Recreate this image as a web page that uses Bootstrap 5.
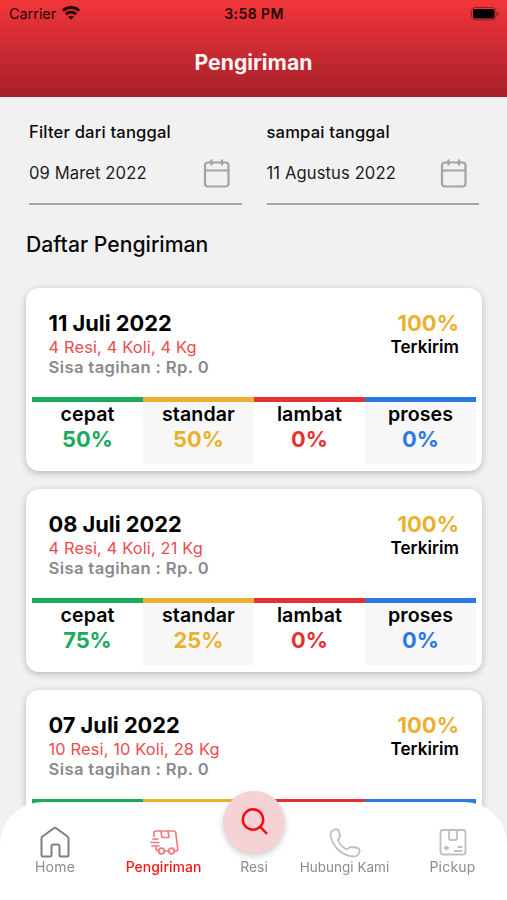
<!DOCTYPE html>
<html lang="id">
<head>
<meta charset="utf-8">
<meta name="viewport" content="width=device-width, initial-scale=1">
<title>Pengiriman</title>
<link href="https://cdn.jsdelivr.net/npm/bootstrap@5.3.0/dist/css/bootstrap.min.css" rel="stylesheet">
<style>
:root{--green:#1aab5c;--amber:#ebb02f;--red:#e83034;--blue:#2c79e6}
html,body{height:100%}
body{font-family:Inter,"Liberation Sans",sans-serif;color:#0a0a0a;background:#f1f1f1}
.screen{height:900px;max-width:507px;overflow:hidden}
.top-head{height:97px;background:linear-gradient(#f2363a,#a5202a)}
.status-bar{height:27px;font-size:14.4px;color:#260507;display:grid;grid-template-columns:1fr auto 1fr;padding:0 8px 0 9px}
.status-time{font-weight:600;font-size:14px;letter-spacing:.4px}
.top-title{font-size:21.2px;line-height:28px;font-weight:700;color:#fff5f5;margin-top:20.500px}
.filters{padding:24px 28px 0 29px;gap:25px}
.filter-field{flex:1 1 0;height:84px;border-bottom:2px solid #a6a6a6}
.filter-name{font-size:16.6px;line-height:22px;font-weight:500;letter-spacing:.17px}
.filter-date{font-size:16.6px;line-height:22px;color:#1c1c1c;letter-spacing:.1px}
.date-row{margin-top:15px;padding-right:12px}
.list-title{font-size:21.2px;line-height:28px;font-weight:500;margin:25px 0 30px 26px}
.deliveries{padding:0 25px 0 26px;gap:18px}
.delivery{height:183px;border:0;border-radius:13px;padding:0 6px;box-shadow:0 2px 7px rgba(0,0,0,.24);flex:none}
.delivery-top{height:109px;padding:22px 17px 0 16.500px}
.d-date{font-size:21.8px;line-height:27px;font-weight:700;color:#000}
.d-info{font-size:16.4px;line-height:20px;color:#ee4a4e;letter-spacing:.15px}
.d-rest{font-size:16.6px;line-height:21px;font-weight:600;color:#8a8a8a;letter-spacing:.38px}
.d-pct{font-size:22px;line-height:26px;font-weight:700;color:var(--amber)}
.d-state{font-size:17.1px;line-height:21px;font-weight:600;color:#000;letter-spacing:.05px}
.speed{flex:1 1 0;height:67px;border-top:5px solid;text-align:center;padding-top:1px}
.speed:nth-child(even){background:#f7f7f7}
.speed-name{font-size:19.6px;line-height:22px;font-weight:600;color:#000;letter-spacing:.1px}
.speed-val{font-size:21.8px;line-height:28px;font-weight:700}
.c-green{color:var(--green)}.c-amber{color:var(--amber)}.c-red{color:var(--red)}.c-blue{color:var(--blue)}
.tabs-bar{height:98px;max-width:507px;background:#fff;border-radius:43px 43px 0 0;color:#8c8c8c}
.tab{flex:none;padding-top:23px;font-size:14px;line-height:16px}
.tab svg{height:34px;display:block}
.tab-home{width:110px;letter-spacing:.2px}
.tab-send{width:107px}
.tab-resi{width:74px}
.tab-call{width:107px;font-size:13.500px}
.tab-pick{width:109px;letter-spacing:.2px}
.tab-on{color:#f01c1c;font-weight:500}
.fab{width:62px;height:62px;margin-top:-34px;margin-bottom:6px;background:#f5d3d5;box-shadow:0 3px 6px rgba(0,0,0,.2)}
</style>
</head>
<body>
<main class="screen d-flex flex-column">
<header class="top-head flex-shrink-0">
  <div class="status-bar align-items-center">
    <div class="d-flex align-items-center gap-2"><span>Carrier</span>
      <svg style="margin-left:-2px" width="18" height="14" viewBox="0 0 18 14" fill="none" stroke="#260507" stroke-width="2.8"><path d="M.8 4.700C5.600.4 12.400.4 17.200 4.700M3.800 8.200c3.100-2.700 7.300-2.700 10.400 0"/><path d="M9 13.600 6 10.800c1.700-1.500 4.300-1.500 6 0z" fill="#260507" stroke="none"/></svg></div>
    <span class="status-time">3:58 PM</span>
    <svg class="ms-auto" width="28" height="14" viewBox="0 0 28 14"><rect x="0.500" y="0.500" width="24.500" height="12.500" rx="3.800" fill="none" stroke="#8f1f24"/><rect x="2" y="2" width="21.500" height="9.500" rx="2" fill="#000"/><path d="M26 5v4q1.600-.6 1.600-2T26 5" fill="#8f1f24"/></svg>
  </div>
  <h1 class="top-title text-center mb-0">Pengiriman</h1>
</header>
<section class="filters d-flex flex-shrink-0">
  <div class="filter-field"><div class="filter-name">Filter dari tanggal</div>
    <div class="date-row d-flex justify-content-between align-items-center"><span class="filter-date">09 Maret 2022</span>
    <svg width="27" height="30" viewBox="0 0 27 30" fill="none" stroke="#a3a3a3" stroke-width="2.200"><rect x="2" y="4.500" width="23.500" height="24" rx="3"/><path d="M2 12.500h23.500M8.500 1.500v6M19 1.500v6"/></svg></div></div>
  <div class="filter-field"><div class="filter-name">sampai tanggal</div>
    <div class="date-row d-flex justify-content-between align-items-center"><span class="filter-date">11 Agustus 2022</span>
    <svg width="27" height="30" viewBox="0 0 27 30" fill="none" stroke="#a3a3a3" stroke-width="2.200"><rect x="2" y="4.500" width="23.500" height="24" rx="3"/><path d="M2 12.500h23.500M8.500 1.500v6M19 1.500v6"/></svg></div></div>
</section>
<h2 class="list-title flex-shrink-0">Daftar Pengiriman</h2>
<section class="deliveries d-flex flex-column">
  <article class="card delivery">
    <div class="delivery-top d-flex justify-content-between">
      <div><div class="d-date">11 Juli 2022</div><div class="d-info">4 Resi, 4 Koli, 4 Kg</div><div class="d-rest">Sisa tagihan : Rp. 0</div></div>
      <div class="text-end"><div class="d-pct">100%</div><div class="d-state">Terkirim</div></div>
    </div>
    <div class="d-flex">
      <div class="speed c-green"><div class="speed-name">cepat</div><div class="speed-val">50%</div></div>
      <div class="speed c-amber"><div class="speed-name">standar</div><div class="speed-val">50%</div></div>
      <div class="speed c-red"><div class="speed-name">lambat</div><div class="speed-val">0%</div></div>
      <div class="speed c-blue"><div class="speed-name">proses</div><div class="speed-val">0%</div></div>
    </div>
  </article>
  <article class="card delivery">
    <div class="delivery-top d-flex justify-content-between">
      <div><div class="d-date">08 Juli 2022</div><div class="d-info">4 Resi, 4 Koli, 21 Kg</div><div class="d-rest">Sisa tagihan : Rp. 0</div></div>
      <div class="text-end"><div class="d-pct">100%</div><div class="d-state">Terkirim</div></div>
    </div>
    <div class="d-flex">
      <div class="speed c-green"><div class="speed-name">cepat</div><div class="speed-val">75%</div></div>
      <div class="speed c-amber"><div class="speed-name">standar</div><div class="speed-val">25%</div></div>
      <div class="speed c-red"><div class="speed-name">lambat</div><div class="speed-val">0%</div></div>
      <div class="speed c-blue"><div class="speed-name">proses</div><div class="speed-val">0%</div></div>
    </div>
  </article>
  <article class="card delivery">
    <div class="delivery-top d-flex justify-content-between">
      <div><div class="d-date">07 Juli 2022</div><div class="d-info">10 Resi, 10 Koli, 28 Kg</div><div class="d-rest">Sisa tagihan : Rp. 0</div></div>
      <div class="text-end"><div class="d-pct">100%</div><div class="d-state">Terkirim</div></div>
    </div>
    <div class="d-flex">
      <div class="speed c-green"></div><div class="speed c-amber"></div><div class="speed c-red"></div><div class="speed c-blue"></div>
    </div>
  </article>
</section>
</main>
<nav class="tabs-bar fixed-bottom d-flex">
  <div class="tab tab-home d-flex flex-column align-items-center">
    <svg width="32" height="34" viewBox="0 0 32 34" fill="none" stroke="#7f7f7f" stroke-width="2" stroke-linejoin="round"><path d="M4 31.500q-1.500 0-1.500-1.500V13.500q0-1.200 1-2L14.800 3.300q1.200-.9 2.400 0L28.500 11.500q1 .8 1 2V30q0 1.500-1.500 1.500h-6q-1.500 0-1.500-1.500v-8.500q0-2-2-2h-4q-2 0-2 2V30q0 1.500-1.500 1.500z"/></svg>
    <span>Home</span></div>
  <div class="tab tab-send tab-on d-flex flex-column align-items-center">
    <svg width="30" height="34" viewBox="0 0 30 34" fill="none" stroke="#f27a7c" stroke-width="1.700" stroke-linecap="round" stroke-linejoin="round"><path d="M5 11.500V8q0-2 2-2h17.500q2 0 2.300 2l1.900 15.500q.2 2.500-2 2.500M18.800 26h-3.300M7 22.500l.5 3h2M12 6l.7 5.500q.2 1 1.200 1h5q1.200 0 1-1.200L19 6M4 14h5M2 17.500h8M3 21h7"/><circle cx="12.500" cy="26" r="2.800"/><circle cx="22.500" cy="26" r="2.800"/></svg>
    <span>Pengiriman</span></div>
  <div class="tab tab-resi d-flex flex-column align-items-center">
    <div class="fab rounded-circle d-flex align-items-center justify-content-center flex-shrink-0"><svg width="30" height="34" viewBox="0 0 30 34" fill="none" stroke="#fa0a0f" stroke-width="2.400"><circle cx="14" cy="14.500" r="10.200"/><path d="m21 21.500 7 7.300"/></svg></div>
    <span>Resi</span></div>
  <div class="tab tab-call d-flex flex-column align-items-center">
    <svg width="32" height="34" viewBox="0 0 32 34" fill="none" stroke="#bfbfbf" stroke-width="1.800" stroke-linejoin="round"><path d="M4 5.200Q7.500 3.500 9.500 5.500L11 10q.3 2-1 3.200-1.500 1.300-.5 3.300 2 4.500 6.500 7 2 1.200 3.500-.2 2-1.800 4-1.300l5.500 1q2 1 1.500 4-1.500 4.500-6 4.500-9-.5-15.500-7T1.500 9.500Q1.500 6.500 4 5.200z"/></svg>
    <span>Hubungi Kami</span></div>
  <div class="tab tab-pick d-flex flex-column align-items-center">
    <svg width="28" height="34" viewBox="0 0 28 34" fill="none" stroke="#bfbfbf" stroke-width="1.800" stroke-linejoin="round"><rect x="1.500" y="5" width="25" height="24.500" rx="2.500"/><path d="M10 5v8.500q0 1.500 1.500 1.500h5q1.500 0 1.500-1.500V5M5 23h5M7.500 20.500v5M18.500 22h5M15 26h8.500"/></svg>
    <span>Pickup</span></div>
</nav>
<script src="https://cdn.jsdelivr.net/npm/bootstrap@5.3.0/dist/js/bootstrap.bundle.min.js"></script>
</body>
</html>
